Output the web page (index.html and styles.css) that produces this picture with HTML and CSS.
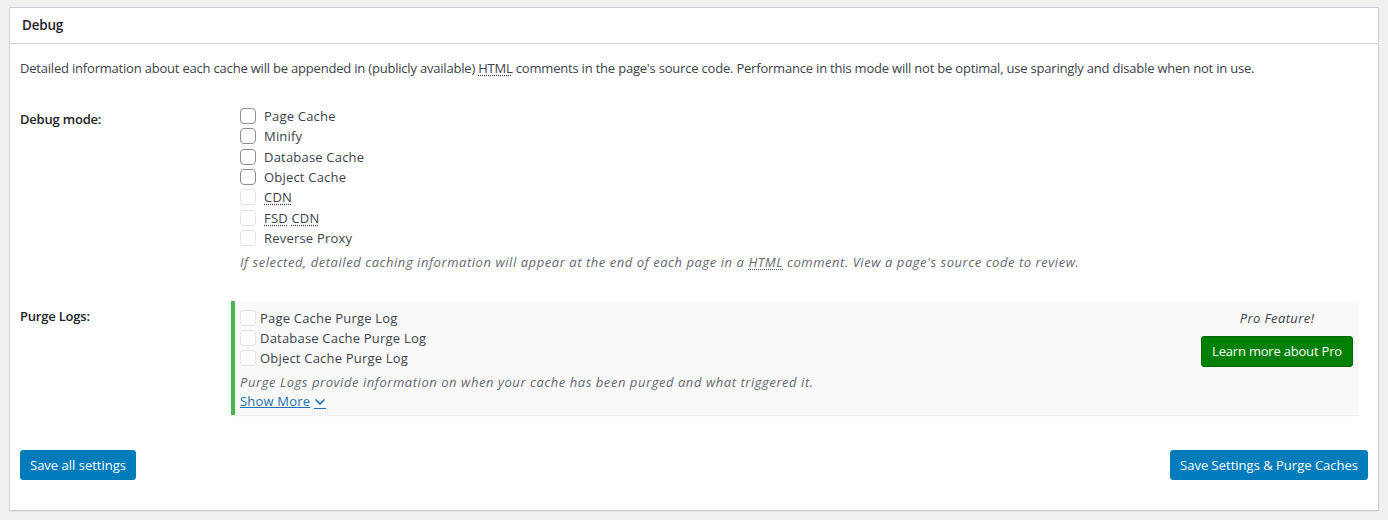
FILE: index.html
```html
<!DOCTYPE html>
<html lang="en">
<head>
    <meta charset="UTF-8">
    <meta name="viewport" content="width=device-width, initial-scale=1.0">
    <title>Debug</title>
    <link rel="stylesheet" href="styles.css">
</head>
<body>
    <div class="postbox">
        <h3 class="hndle">Debug</h3>
        <div class="inside">
            <p class="intro">Detailed information about each cache will be appended in (publicly available) <abbr>HTML</abbr> comments in the page's source code. Performance in this mode will not be optimal, use sparingly and disable when not in use.</p>

            <div class="form-row">
                <div class="row-label">Debug mode:</div>
                <div class="row-field">
                    <label class="check"><input type="checkbox"> Page Cache</label>
                    <label class="check"><input type="checkbox"> Minify</label>
                    <label class="check"><input type="checkbox"> Database Cache</label>
                    <label class="check"><input type="checkbox"> Object Cache</label>
                    <label class="check off"><input type="checkbox" disabled> <abbr>CDN</abbr></label>
                    <label class="check off"><input type="checkbox" disabled> <span><abbr>FSD</abbr> <abbr>CDN</abbr></span></label>
                    <label class="check off"><input type="checkbox" disabled> Reverse Proxy</label>
                    <p class="description">If selected, detailed caching information will appear at the end of each page in a <abbr>HTML</abbr> comment. View a page's source code to review.</p>
                </div>
            </div>

            <div class="form-row pro-row">
                <div class="row-label">Purge Logs:</div>
                <div class="row-field">
                    <div class="pro-box">
                        <div class="pro-main">
                            <label class="check tight"><input type="checkbox" disabled> Page Cache Purge Log</label>
                            <label class="check tight"><input type="checkbox" disabled> Database Cache Purge Log</label>
                            <label class="check tight"><input type="checkbox" disabled> Object Cache Purge Log</label>
                            <p class="description">Purge Logs provide information on when your cache has been purged and what triggered it.</p>
                            <a href="#" class="show-more">Show More <svg width="12" height="8" viewBox="0 0 12 8"><path d="M1.5 1.5 6 6l4.5-4.5" fill="none" stroke="currentColor" stroke-width="1.6"/></svg></a>
                        </div>
                        <div class="pro-side">
                            <em>Pro Feature!</em>
                            <a href="#" class="btn-pro">Learn more about Pro</a>
                        </div>
                    </div>
                </div>
            </div>

            <div class="actions">
                <button class="button-primary">Save all settings</button>
                <button class="button-primary">Save Settings &amp; Purge Caches</button>
            </div>
        </div>
    </div>
</body>
</html>
```

FILE: styles.css
```css
body {
  margin: 0;
  padding: 7px 9px 9px;
  background: #f0f0f1;
  font-family: 'Open Sans', 'Noto Sans', sans-serif;
  font-size: 13px;
  letter-spacing: -0.2px;
  color: #3c434a;
}

.postbox {
  background: #fff;
  border: 1px solid #ccd0d4;
  box-shadow: 0 1px 1px rgba(0, 0, 0, .04);
}

.hndle {
  margin: 0;
  padding: 0 12px;
  height: 35px;
  line-height: 35px;
  font-size: 13.5px;
  font-weight: 600;
  color: #1d2327;
  border-bottom: 1px solid #ccd0d4;
}

.inside {
  padding: 0 10px 30px;
}

.intro {
  margin: 14px 0 28px;
  line-height: 20px;
}

abbr {
  text-decoration: underline dotted;
  text-underline-offset: 2px;
}

.form-row {
  display: flex;
  margin-bottom: 16px;
}

.row-label {
  width: 220px;
  flex-shrink: 0;
  font-weight: 600;
  color: #1d2327;
  padding-top: 3px;
  line-height: 20px;
}

.row-field {
  flex: 1;
  min-width: 0;
}

.pro-row {
  margin-top: 29px;
}

.pro-row .row-label {
  padding-top: 5px;
}

.check {
  display: flex;
  align-items: center;
  gap: 8px;
  height: 20.3px;
  line-height: 20px;
  letter-spacing: 0.2px;
}

.check input {
  appearance: none;
  -webkit-appearance: none;
  margin: 0;
  width: 16px;
  height: 16px;
  border: 1px solid #8c8f94;
  border-radius: 4px;
  background: #fff;
}

.check.off input,
.check.tight input {
  border-color: rgba(220, 220, 222, .75);
  background: rgba(255, 255, 255, .5);
}

.check.tight {
  gap: 4px;
  height: 20px;
}

.description {
  margin: 4px 0 0;
  font-style: italic;
  letter-spacing: 0.55px;
  color: #646970;
  line-height: 20px;
}

.pro-box {
  display: flex;
  margin: 0 9px 0 -9px;
  padding: 7px 6px 5px 5px;
  background: #f9f9f9;
  border-left: 4px solid #46b450;
  box-shadow: 0 1px 1px rgba(0, 0, 0, .06);
}

.pro-main {
  flex: 1;
}

.pro-main .description {
  margin-top: 4px;
}

.show-more {
  color: #2271b1;
  line-height: 18px;
  display: inline-flex;
  align-items: center;
  gap: 4px;
  letter-spacing: 0.2px;
}

.show-more svg {
  border-bottom: 1px solid #2271b1;
  padding: 2px 0 2px;
  margin-top: 3px;
}

.pro-side {
  width: 152px;
  display: flex;
  flex-direction: column;
  align-items: center;
}

.pro-side em {
  line-height: 20px;
  letter-spacing: 0.4px;
}

.btn-pro {
  margin-top: 8px;
  background: #008000;
  color: #fff;
  text-decoration: none;
  border: 1px solid #006400;
  border-radius: 3px;
  padding: 0 10px;
  line-height: 29px;
  white-space: nowrap;
}

.actions {
  display: flex;
  justify-content: space-between;
  margin-top: 35px;
}

.button-primary {
  background: #007cba;
  color: #fff;
  border: 1px solid #007cba;
  border-radius: 3px;
  padding: 0 9px;
  height: 30px;
  font: inherit;
  cursor: pointer;
}
```
